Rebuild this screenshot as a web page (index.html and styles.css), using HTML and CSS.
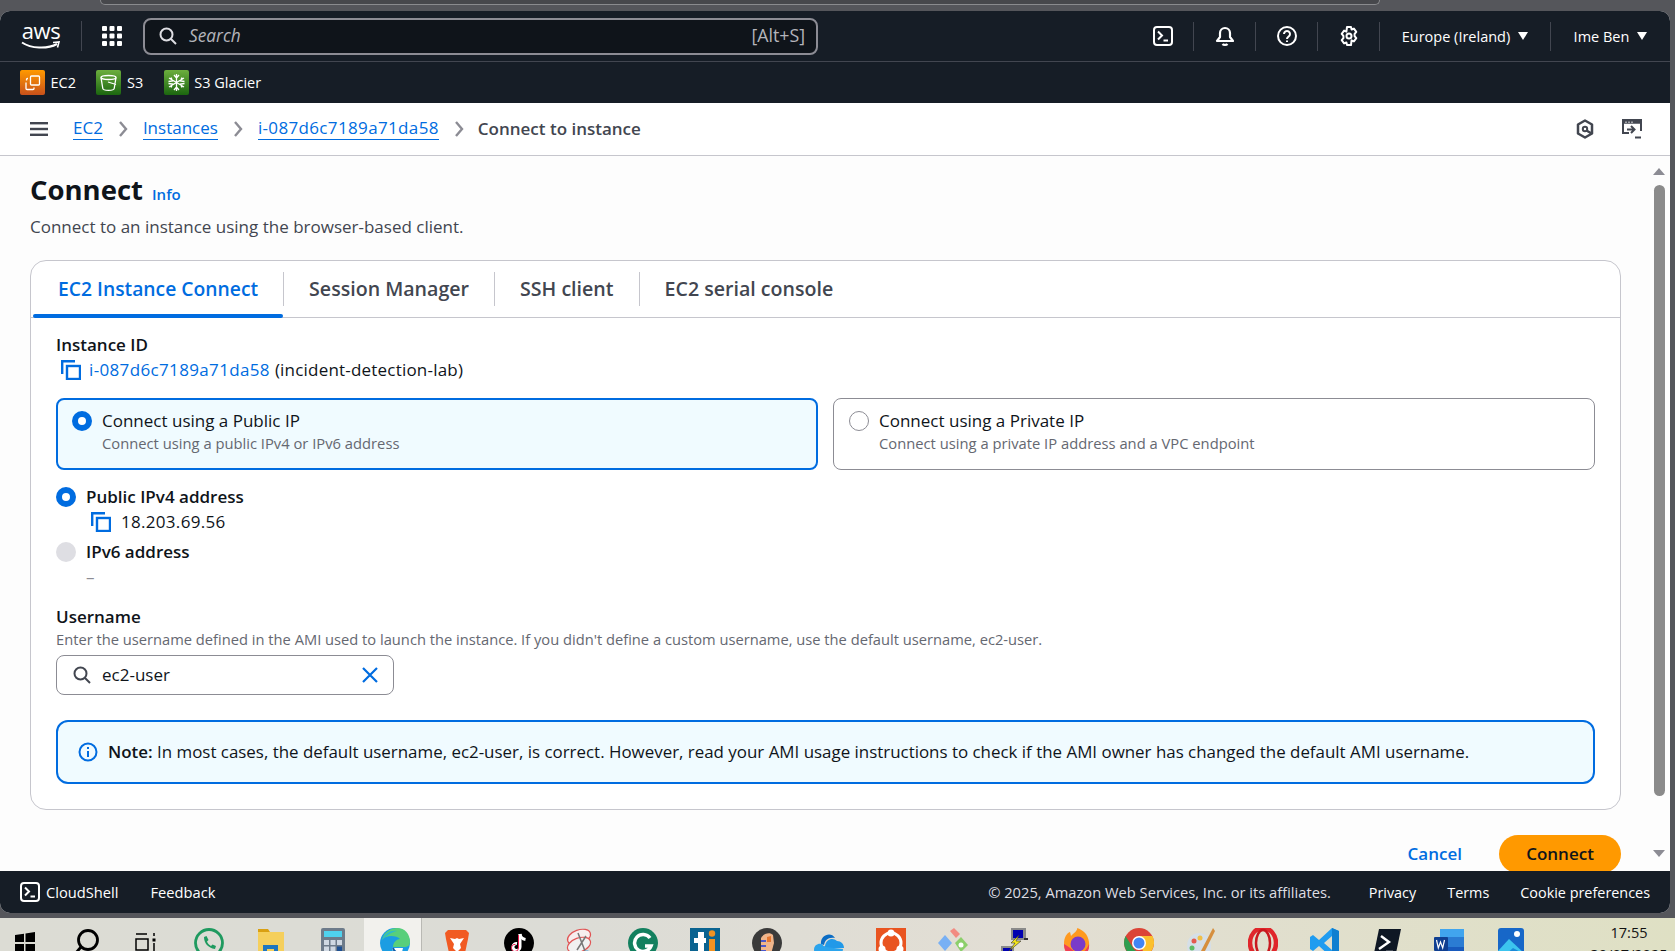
FILE: index.html
```html
<!DOCTYPE html>
<html lang="en">
<head>
    <meta charset="UTF-8">
    <title>Connect to instance | EC2</title>
    <link rel="stylesheet" href="styles.css">
</head>
<body>
    <div class="chrome"><div class="chrome-tab"></div></div>

    <div class="app">
        <header class="topnav">
            <div class="logo">
                <span class="logo-text">aws</span>
                <svg class="logo-smile" viewBox="0 0 40 9"><path d="M1 1.500C10 7.500 26 8.500 36 3" fill="none" stroke="#fff" stroke-width="2"/><path d="M32 1.500l6-.5-1.500 5.500" fill="none" stroke="#fff" stroke-width="1.600"/></svg>
            </div>
            <div class="nav-sep"></div>
            <svg class="grid-icon" viewBox="0 0 20 20" fill="#fff">
                <rect x="0" y="0" width="5" height="5" rx="1"/><rect x="7.500" y="0" width="5" height="5" rx="1"/><rect x="15" y="0" width="5" height="5" rx="1"/>
                <rect x="0" y="7.500" width="5" height="5" rx="1"/><rect x="7.500" y="7.500" width="5" height="5" rx="1"/><rect x="15" y="7.500" width="5" height="5" rx="1"/>
                <rect x="0" y="15" width="5" height="5" rx="1"/><rect x="7.500" y="15" width="5" height="5" rx="1"/><rect x="15" y="15" width="5" height="5" rx="1"/>
            </svg>
            <div class="searchbox">
                <svg class="icon-18" viewBox="0 0 18 18" fill="none" stroke="#dedee3" stroke-width="2"><circle cx="7.500" cy="7.500" r="6"/><path d="M12 12l5 5"/></svg>
                <span class="search-text">Search</span>
                <span class="search-key">[Alt+S]</span>
            </div>
            <div class="nav-right">
                <div class="nav-cell first">
                    <svg class="icon-20" viewBox="0 0 20 20" fill="none" stroke="#fff" stroke-width="2"><rect x="1" y="1" width="18" height="18" rx="3"/><path d="M5 5.500l4 4-4 4M10.500 14.500h4.500"/></svg>
                </div>
                <div class="nav-cell">
                    <svg class="icon-20" viewBox="0 0 20 20" fill="none" stroke="#fff" stroke-width="2.200" stroke-linejoin="round"><path d="M5 11V7a5 5 0 0 1 10 0v4l3 4H2z"/><path d="M7.500 18c1 1.200 4 1.200 5 0"/></svg>
                </div>
                <div class="nav-cell">
                    <svg class="icon-20" viewBox="0 0 20 20" fill="none" stroke="#fff" stroke-width="2"><circle cx="10" cy="10" r="9"/><path d="M7 8a3 3 0 1 1 4.500 2.600c-1 .6-1.500 1.100-1.500 2.400M10 14.500v1.500"/></svg>
                </div>
                <div class="nav-cell">
                    <svg class="icon-20" viewBox="0 0 20 20" fill="none" stroke="#fff" stroke-width="2" stroke-linejoin="round"><circle cx="10" cy="10" r="2.500"/><path d="M8 1h4l.6 2.600 2.300-1 2.400 3.200-1.700 2 0 2.400 1.700 2-2.400 3.200-2.300-1L12 19H8l-.6-2.600-2.300 1-2.400-3.200 1.700-2 0-2.400-1.700-2 2.400-3.200 2.300 1z"/></svg>
                </div>
                <div class="nav-cell region">
                    <span>Europe (Ireland)</span><span class="caret"></span>
                </div>
                <div class="nav-cell user">
                    <span>Ime Ben</span><span class="caret"></span>
                </div>
            </div>
        </header>

        <nav class="servicebar">
            <a class="service">
                <span class="service-icon orange">
                    <svg viewBox="0 0 25 25" fill="none" stroke="#fff" stroke-width="1.300"><rect x="10.500" y="6" width="9" height="9" rx="1"/><path d="M8 8.500H7.500a1 1 0 0 0-1 1v1M6 12.500v6a1 1 0 0 0 1 1h6a1 1 0 0 0 1-1v-1"/></svg>
                </span>EC2
            </a>
            <a class="service">
                <span class="service-icon green">
                    <svg viewBox="0 0 25 25" fill="none" stroke="#fff" stroke-width="1.300"><ellipse cx="12.500" cy="7.500" rx="7.500" ry="2"/><path d="M5 7.500l1.800 11c.2 1.200 2.500 1.800 5.700 1.800s5.500-.6 5.700-1.800l1.800-11M12 12l8 2.500"/></svg>
                </span>S3
            </a>
            <a class="service">
                <span class="service-icon green">
                    <svg viewBox="0 0 25 25" fill="none" stroke="#fff" stroke-width="1.300"><path d="M12.500 4v17M5 8l15 9M20 8L5 17M10 5l2.500 3L15 5M10 20l2.500-3 2.500 3M4.500 11.500l4-.5-1.500-3.500M20.500 13.500l-4 .5 1.500 3.500M20.500 11.500l-4-.5 1.500-3.500M4.500 13.500l4 .5-1.500 3.500"/></svg>
                </span>S3 Glacier
            </a>
        </nav>

        <div class="crumbbar">
            <svg class="burger" viewBox="0 0 18 14" fill="#424650"><rect width="18" height="2.400"/><rect y="5.800" width="18" height="2.400"/><rect y="11.600" width="18" height="2.400"/></svg>
            <a class="crumb">EC2</a>
            <svg class="chev" viewBox="0 0 10 16" fill="none" stroke="#8c8c94" stroke-width="2.400"><path d="M2 1l6 7-6 7"/></svg>
            <a class="crumb">Instances</a>
            <svg class="chev" viewBox="0 0 10 16" fill="none" stroke="#8c8c94" stroke-width="2.400"><path d="M2 1l6 7-6 7"/></svg>
            <a class="crumb crumb-id">i-087d6c7189a71da58</a>
            <svg class="chev" viewBox="0 0 10 16" fill="none" stroke="#8c8c94" stroke-width="2.400"><path d="M2 1l6 7-6 7"/></svg>
            <span class="crumb-current">Connect to instance</span>
            <div class="crumb-tools">
                <svg class="icon-20" viewBox="0 0 20 20" fill="none" stroke="#424650" stroke-width="2.500" stroke-linejoin="round"><path d="M10 1.500l7 4v9l-7 4-7-4v-9z"/><circle cx="10" cy="10" r="2.200" stroke-width="2"/><path d="M11.500 11.500l5 3"/></svg>
                <svg class="icon-20" viewBox="0 0 20 20" fill="none" stroke="#424650" stroke-width="2"><path d="M7 14H1V1h18v11" /><path d="M1 3h18" stroke-width="3.600"/><path d="M3.500 3.200h1M6.500 3.200h1M9.500 3.200h1" stroke="#fff" stroke-width="1.400"/><path d="M5 10.500h7M9 7l3.500 3.500L9 14" /><path d="M13 18.500h6"/></svg>
            </div>
        </div>

        <main class="main">
            <div class="content">
                <div class="title-row">
                    <h1>Connect</h1>
                    <a class="info">Info</a>
                </div>
                <p class="page-desc">Connect to an instance using the browser-based client.</p>

                <section class="card">
                    <div class="tabs">
                        <div class="tab active">EC2 Instance Connect</div>
                        <div class="tab">Session Manager</div>
                        <div class="tab">SSH client</div>
                        <div class="tab">EC2 serial console</div>
                    </div>
                    <div class="card-body">
                        <div class="label">Instance ID</div>
                        <div class="copy-row id-row">
                            <svg class="copy-icon" viewBox="0 0 20 20" fill="none" stroke="#006ce0" stroke-width="2.400"><path d="M1.200 14V1.200H14"/><rect x="6" y="6" width="13" height="13"/></svg>
                            <a class="link">i-087d6c7189a71da58</a>
                            <span class="id-name">(incident-detection-lab)</span>
                        </div>

                        <div class="options">
                            <div class="option selected">
                                <span class="radio on"></span>
                                <div>
                                    <div class="option-title">Connect using a Public IP</div>
                                    <div class="option-desc">Connect using a public IPv4 or IPv6 address</div>
                                </div>
                            </div>
                            <div class="option">
                                <span class="radio"></span>
                                <div>
                                    <div class="option-title">Connect using a Private IP</div>
                                    <div class="option-desc">Connect using a private IP address and a VPC endpoint</div>
                                </div>
                            </div>
                        </div>

                        <div class="addr-row">
                            <span class="radio on"></span>
                            <span class="label">Public IPv4 address</span>
                        </div>
                        <div class="copy-row ip-row">
                            <svg class="copy-icon" viewBox="0 0 20 20" fill="none" stroke="#006ce0" stroke-width="2.400"><path d="M1.200 14V1.200H14"/><rect x="6" y="6" width="13" height="13"/></svg>
                            <span class="ip">18.203.69.56</span>
                        </div>
                        <div class="addr-row v6">
                            <span class="radio off"></span>
                            <span class="label">IPv6 address</span>
                        </div>
                        <div class="dash">–</div>

                        <div class="label user-label">Username</div>
                        <div class="hint">Enter the username defined in the AMI used to launch the instance. If you didn't define a custom username, use the default username, ec2-user.</div>
                        <div class="input">
                            <svg class="icon-18" viewBox="0 0 18 18" fill="none" stroke="#424650" stroke-width="2"><circle cx="7.500" cy="7.500" r="6"/><path d="M12 12l5 5"/></svg>
                            <span class="input-text">ec2-user</span>
                            <svg class="icon-18 clear" viewBox="0 0 18 18" fill="none" stroke="#006ce0" stroke-width="2.200"><path d="M2 2l14 14M16 2L2 16"/></svg>
                        </div>

                        <div class="alert">
                            <svg class="icon-20" viewBox="0 0 20 20" fill="none" stroke="#006ce0" stroke-width="2"><circle cx="10" cy="10" r="8.500"/><path d="M10 9v6M10 5v2"/></svg>
                            <span class="alert-text"><b>Note:</b> In most cases, the default username, ec2-user, is correct. However, read your AMI usage instructions to check if the AMI owner has changed the default AMI username.</span>
                        </div>
                    </div>
                </section>

                <div class="actions">
                    <a class="cancel">Cancel</a>
                    <a class="connect">Connect</a>
                </div>
            </div>
            <div class="scrollbar">
                <span class="arrow-up"></span>
                <span class="thumb"></span>
                <span class="arrow-down"></span>
            </div>
        </main>

        <footer class="footer">
            <svg class="icon-20" viewBox="0 0 20 20" fill="none" stroke="#fff" stroke-width="2"><rect x="1" y="1" width="18" height="18" rx="3"/><path d="M5 5.500l4 4-4 4M10.500 14.500h4.500"/></svg>
            <a class="foot-shell">CloudShell</a>
            <a class="foot-feedback">Feedback</a>
            <span class="foot-copy">© 2025, Amazon Web Services, Inc. or its affiliates.</span>
            <a class="foot-link">Privacy</a>
            <a class="foot-link">Terms</a>
            <a class="foot-link">Cookie preferences</a>
        </footer>
    </div>

    <div class="taskbar">
        <div class="task-icons">
            <div class="task-item"><svg viewBox="0 0 30 30"><path d="M7 7l9-1.300V14H7zM17.500 5.500L27 4v10h-9.500zM7 16h9v9l-9-1.300zM17.500 16H27v10l-9.500-1.500z" fill="#000"/></svg></div>
            <div class="task-item"><svg viewBox="0 0 30 30" fill="none" stroke="#000" stroke-width="2.800"><circle cx="18" cy="12" r="9.500"/><path d="M11 19l-6 7"/></svg></div>
            <div class="task-item"><svg viewBox="0 0 30 30" fill="none" stroke="#000" stroke-width="1.500"><path d="M4 6h11M4 11h12v11H4zM4 26h12"/><path d="M22 5v3M22 15v9"/><rect x="20.500" y="10.500" width="3" height="3" fill="#000" stroke="none"/></svg></div>
            <div class="task-item"><svg viewBox="0 0 30 30" fill="none" stroke="#1f9a5f" stroke-width="2.800"><circle cx="15" cy="15" r="13.500"/><path d="M10 9c0 6 4 11 11 12l1-3-3.500-1.500-1.500 1.500c-2-1-3.500-3-4-4.500l1.500-1.500L12.500 8z" fill="#1f9a5f" stroke="none"/></svg></div>
            <div class="task-item"><svg viewBox="0 0 30 30"><path d="M2 1h10l2 3v4H2z" fill="#d9a012"/><rect x="2" y="4" width="26" height="26" fill="#f5cf5c"/><rect x="7" y="17" width="15" height="13" fill="#1f76bf"/><rect x="11" y="21" width="7" height="9" fill="#f5cf5c"/></svg></div>
            <div class="task-item"><svg viewBox="0 0 30 30"><rect x="3" y="0" width="24" height="30" rx="2" fill="#6d7b8a"/><rect x="6" y="3" width="18" height="6" fill="#4fd2ee"/><path d="M6 12h5v5H6zM12.500 12h5v5h-5zM19 12h5v5h-5zM6 18.500h5v5H6zM12.500 18.500h5v5h-5zM6 25h5v5H6zM12.500 25h5v5h-5z" fill="#cfd8e2"/><rect x="19" y="18.500" width="5" height="11.500" fill="#1d4f91"/></svg></div>
            <div class="task-item edge"><svg viewBox="0 0 30 30"><circle cx="15" cy="15" r="15" fill="#1b9de2"/><path d="M2 12C4 3 12 0 17 0c8 0 13 6 13 14 0 3-2 5-6 5H13c0-5 4-8 7-8-3-3-13-5-18 1z" fill="#58cf7a"/><path d="M2 12C5 5 11 2 17 3c-6 1-12 6-15 9z" fill="#2bb9cf"/><path d="M12 19c0 5 4 9 9 9l2-8H12z" fill="#fff"/><path d="M13 20c1 3 3 5 7 5" stroke="#0c5aa6" stroke-width="2" fill="none"/></svg></div>
            <div class="task-item"><svg viewBox="0 0 30 30"><path d="M6 2h18l3 3-1 6-3 14-8 5-8-5L4 11 3 5z" fill="#f15a22"/><path d="M8 10l5 1 2-1 2 1 5-1-4 6 1 4-4 4-4-4 1-4z" fill="#fff"/></svg></div>
            <div class="task-item"><svg viewBox="0 0 30 30"><circle cx="15" cy="15" r="15" fill="#000"/><path d="M16 6v13a3.500 3.500 0 1 1-3-3.500" fill="none" stroke="#fff" stroke-width="3"/><path d="M16 6c.5 3 2.500 5 5.500 5.500" fill="none" stroke="#fff" stroke-width="3"/><path d="M14.500 7v13a3.500 3.500 0 1 1-3-3.500" fill="none" stroke="#ee1d52" stroke-width="1"/></svg></div>
            <div class="task-item"><svg viewBox="0 0 30 30" fill="none"><ellipse cx="13" cy="9" rx="12" ry="7" fill="#f7eeee" stroke="#e05555" stroke-width="1.200" transform="rotate(-20 13 9)"/><ellipse cx="13" cy="17" rx="12" ry="7" fill="#f1f1f1" stroke="#e05555" stroke-width="1.200" transform="rotate(-20 13 17)"/><path d="M12 5l7 18M20 8l-9 14" stroke="#777" stroke-width="1.500"/><circle cx="21" cy="27" r="3.500" stroke="#1e88d9" stroke-width="2"/><circle cx="14" cy="28" r="3.500" stroke="#1e88d9" stroke-width="2"/></svg></div>
            <div class="task-item"><svg viewBox="0 0 30 30"><circle cx="15" cy="15" r="15" fill="#13805f"/><path d="M22 10a8.500 8.500 0 1 0 1 8h-6" fill="none" stroke="#fff" stroke-width="3.500"/></svg></div>
            <div class="task-item"><svg viewBox="0 0 30 30"><rect width="30" height="30" fill="#0a6390"/><path d="M8 4v6H4v5h4v15h6V15h2v-5h-2V4z" fill="#fff"/><rect x="19" y="11" width="6" height="19" fill="#f19222"/><circle cx="22" cy="5.500" r="3.200" fill="#f19222"/></svg></div>
            <div class="task-item"><svg viewBox="0 0 30 30"><circle cx="15" cy="15" r="15" fill="#3a3a3a"/><path d="M9 10c3-5 9-6 12-3l1 8-4 15H9z" fill="#f0b58b"/><path d="M9 13h5M9 18h5M9 23h5" stroke="#4d58c9" stroke-width="2"/><path d="M15 9l4-1v6h-4z" fill="#e5762f"/></svg></div>
            <div class="task-item"><svg viewBox="0 0 30 30"><path d="M7 16c-1-9 10-13 14-6-7-1-10 2-11 7z" fill="#0b6cc4"/><path d="M11 18c1-7 8-9 12-5 4 0 7 3 7 7H8z" fill="#2199e8"/><path d="M0 22c0-5 4-7 8-6 1 2 3 3 4 3l8 1 9 1c0 3-2 5-5 5H5c-3 0-5-2-5-4z" fill="#2ba4ec"/></svg></div>
            <div class="task-item"><svg viewBox="0 0 30 30"><rect width="30" height="30" fill="#e95420"/><circle cx="15" cy="15" r="10" fill="none" stroke="#fff" stroke-width="3"/><circle cx="15" cy="5" r="3.500" fill="#fff"/><circle cx="6" cy="21" r="3.500" fill="#fff"/><circle cx="24" cy="21" r="3.500" fill="#fff"/></svg></div>
            <div class="task-item"><svg viewBox="0 0 30 30"><path d="M12 3l4-3 6 6-4 4z" fill="#f28b82"/><path d="M0 15l7-8 7 8-7 8z" fill="#78b0f4"/><path d="M17 15l6-6 7 8-7 7z" fill="#8ccf6b"/><path d="M8 30l6-7 6 7z" fill="#fbd75b"/><circle cx="23" cy="17" r="2.500" fill="#fff"/></svg></div>
            <div class="task-item"><svg viewBox="0 0 30 30"><rect x="11" y="0" width="15" height="12" fill="#8a8a8a"/><rect x="13" y="2" width="10" height="8" fill="#0000b0"/><rect x="1" y="18" width="13" height="12" fill="#8a8a8a"/><rect x="3" y="20" width="9" height="10" fill="#0000b0"/><path d="M19 7l-8 8 4 0-6 8 12-10-5 0z" fill="#f5e71b" stroke="#333" stroke-width=".6"/><path d="M24 10h4v2h-4z" fill="#333"/></svg></div>
            <div class="task-item"><svg viewBox="0 0 30 30"><path d="M2 16C2 9 5 5 8 4l1 4c3-3 7-6 6-8 6 2 11 6 12 14 1 9-5 16-12 16S2 24 2 16z" fill="#ff9a1f"/><path d="M2 16c0 9 6 14 13 14 8 0 13-7 12-14-3 8-9 11-14 8-3-2-5-5-11-8z" fill="#f03e55"/><circle cx="16" cy="16" r="7.500" fill="#7a3bc9"/></svg></div>
            <div class="task-item"><svg viewBox="0 0 30 30"><circle cx="15" cy="15" r="15" fill="#db4437"/><path d="M15 8h13.500a15 15 0 0 1-7 20L15 15z" fill="#fbc02d"/><path d="M1.500 8l9 14 11 6A15 15 0 0 1 1.500 8z" fill="#2e9e4f"/><circle cx="15" cy="15" r="7" fill="#fff"/><circle cx="15" cy="15" r="5.500" fill="#4285f4"/></svg></div>
            <div class="task-item"><svg viewBox="0 0 30 30"><ellipse cx="13" cy="18" rx="12" ry="13" fill="#d5dfe8"/><circle cx="8" cy="13" r="2.500" fill="#e45a4e"/><circle cx="14" cy="10" r="2.500" fill="#f0c048"/><circle cx="6" cy="20" r="2.500" fill="#5dbb63"/><path d="M27 0l2 3-11 22-3-2z" fill="#d68f3e"/></svg></div>
            <div class="task-item"><svg viewBox="0 0 30 30" fill="none"><ellipse cx="15" cy="15" rx="13" ry="15" stroke="#e0262b" stroke-width="4.500"/><ellipse cx="15" cy="15" rx="7" ry="13" stroke="#c9181e" stroke-width="2.500"/></svg></div>
            <div class="task-item"><svg viewBox="0 0 30 30"><path d="M22 0l7 3v24l-7 3-13-12-6 5-3-2V9l3-2 6 5zM22 8l-8 7 8 7z" fill="#1f9cf0"/><path d="M22 0l7 3v24l-7 3z" fill="#0f7fd0"/></svg></div>
            <div class="task-item"><svg viewBox="0 0 30 30"><path d="M7 1h22l-6 29H1z" fill="#0e1724"/><path d="M9 8l8 6-10 7M14 24h7" fill="none" stroke="#fff" stroke-width="2.400"/></svg></div>
            <div class="task-item"><svg viewBox="0 0 30 30"><rect x="6" y="1" width="24" height="29" rx="2" fill="#2b7cd3"/><rect x="6" y="1" width="24" height="8" fill="#41a5ee"/><rect x="6" y="19" width="24" height="11" fill="#185abd"/><rect x="0" y="9" width="14" height="14" rx="1" fill="#103f91"/><path d="M2.500 12l1.800 8 2.200-6 2.200 6 1.800-8" fill="none" stroke="#fff" stroke-width="1.200"/></svg></div>
            <div class="task-item"><svg viewBox="0 0 30 30"><rect x="2" y="0" width="26" height="30" rx="3" fill="#1767c8"/><circle cx="21" cy="6" r="3" fill="#fff"/><path d="M2 23l11-12 15 14v5H2z" fill="#3cc4ee"/><path d="M8 28l9-8 11 6v4H8z" fill="#1a8ad8"/></svg></div>
        </div>
        <div class="clock">
            <div>17:55</div>
            <div class="clock-date">30/07/2025</div>
        </div>
    </div>
</body>
</html>
```

FILE: styles.css
```css
*{
    box-sizing: border-box;
}
html, body{
    margin: 0;
    height: 951px;
    overflow: hidden;
}
body{
    display: flex;
    flex-direction: column;
    background: #55565b;
    font-family: "Open Sans", "Noto Sans", sans-serif;
    font-size: 17px;
    color: #0f141a;
}
a{
    cursor: pointer;
}
svg{
    display: block;
    flex: none;
}
.icon-18{
    width: 18px;
    height: 18px;
}
.icon-20{
    width: 20px;
    height: 20px;
}

/* browser strip */
.chrome{
    height: 11px;
    flex: none;
}
.chrome-tab{
    width: 1280px;
    height: 5px;
    margin-left: 100px;
    background: #47484c;
    border: 1px solid #8a8b8e;
    border-top: 0;
    border-radius: 0 0 8px 8px;
}
.app{
    width: 1670px;
    height: 902px;
    flex: none;
    display: flex;
    flex-direction: column;
    border-radius: 10px;
    overflow: hidden;
    background: #fff;
}

/* top nav */
.topnav{
    height: 51px;
    flex: none;
    display: flex;
    align-items: center;
    padding-left: 21px;
    background: #161d26;
    border-bottom: 1px solid #424650;
    color: #fff;
    font-size: 14.500px;
}
.logo{
    width: 40px;
    height: 32px;
    margin-top: -2px;
}
.logo-text{
    display: block;
    font-size: 22px;
    font-weight: 500;
    line-height: 22px;
    letter-spacing: -0.500px;
    text-align: center;
}
.logo-smile{
    width: 40px;
    height: 9px;
}
.nav-sep{
    width: 1px;
    height: 30px;
    margin-left: 20px;
    background: #424650;
}
.grid-icon{
    width: 20px;
    height: 20px;
    margin-left: 20px;
}
.searchbox{
    width: 675px;
    height: 37px;
    margin-left: 21px;
    padding: 0 11px 0 14px;
    display: flex;
    align-items: center;
    background: #0f141a;
    border: 2px solid #8c8c94;
    border-radius: 8px;
}
.search-text{
    margin: -2px 0 0 12px;
    font-size: 17.300px;
    font-style: italic;
    color: #b4b4bb;
}
.search-key{
    margin: -2px 0 0 auto;
    font-size: 17.800px;
    color: #b4b4bb;
}
.nav-right{
    margin-left: auto;
    display: flex;
    align-items: center;
}
.nav-cell{
    width: 62px;
    height: 29px;
    display: flex;
    align-items: center;
    justify-content: center;
    border-left: 1px solid #424650;
}
.nav-cell.first{
    border-left: 0;
    width: 61px;
}
.nav-cell.region{
    width: 171px;
}
.nav-cell.user{
    width: 120px;
}
.caret{
    width: 0;
    height: 0;
    margin-left: 8px;
    border-left: 5.500px solid transparent;
    border-right: 5.500px solid transparent;
    border-top: 8px solid #fff;
}

/* favorites */
.servicebar{
    height: 41px;
    flex: none;
    display: flex;
    align-items: center;
    padding-left: 20px;
    background: #161d26;
    color: #fff;
    font-size: 14.500px;
}
.service{
    display: flex;
    align-items: center;
    margin-right: 20.500px;
}
.service-icon{
    width: 25px;
    height: 25px;
    margin-right: 5.500px;
    border-radius: 2px;
}
.service-icon.orange{
    background: linear-gradient(0deg, #c8511b, #ff9900);
}
.service-icon.green{
    background: linear-gradient(0deg, #1b660f, #6cae3e);
}

/* breadcrumbs */
.crumbbar{
    height: 53px;
    flex: none;
    display: flex;
    align-items: center;
    padding: 0 30px;
    background: #fff;
    border-bottom: 1px solid #c6c6cd;
    font-size: 17px;
}
.burger{
    width: 18px;
    height: 14px;
    margin-right: 25px;
}
.crumb{
    margin-top: -2px;
    color: #006ce0;
    border-bottom: 1px solid #006ce0;
    line-height: 22px;
}
.crumb-id{
    letter-spacing: 0.350px;
}
.chev{
    width: 10px;
    height: 16px;
    margin: 0 15px;
}
.crumb-current{
    margin-top: -2px;
    margin-left: -1px;
    font-weight: 600;
    color: #424650;
}
.crumb-tools{
    margin-left: auto;
    margin-right: -2px;
    display: flex;
    gap: 27px;
}

/* main area */
.main{
    flex: 1;
    min-height: 0;
    display: flex;
    background: #fdfdfd;
    overflow: hidden;
}
.content{
    width: 1650px;
    padding: 0 29px 0 30px;
}
.title-row{
    height: 48px;
    padding-top: 13px;
    display: flex;
    align-items: baseline;
}
h1{
    margin: 0;
    font-size: 27.500px;
    font-weight: 700;
    line-height: 42px;
}
.info{
    margin-left: 9px;
    font-size: 15px;
    font-weight: 600;
    color: #006ce0;
}
.page-desc{
    margin: 12px 0 0;
    line-height: 22px;
    color: #424650;
}
.card{
    margin-top: 22px;
    height: 550px;
    background: #fff;
    border: 1px solid #c6c6cd;
    border-radius: 16px;
}
.tabs{
    height: 57px;
    padding-left: 2px;
    display: flex;
    align-items: center;
    border-bottom: 1px solid #c6c6cd;
}
.tab{
    height: 34px;
    padding: 0 25px 2px;
    display: flex;
    align-items: center;
    border-left: 1px solid #c6c6cd;
    font-size: 19.600px;
    font-weight: 600;
    color: #424650;
}
.tab.active{
    position: relative;
    border-left: 0;
    font-size: 19.300px;
    color: #006ce0;
}
.tab.active::after{
    content: "";
    position: absolute;
    left: 0;
    right: 0;
    bottom: -12px;
    height: 4px;
    background: #006ce0;
    border-radius: 2px;
}
.card-body{
    padding: 16px 25px 0;
}
.label{
    font-weight: 600;
    line-height: 22px;
}
.copy-row{
    display: flex;
    align-items: center;
    line-height: 22px;
}
.id-row{
    margin-top: 3px;
    padding-left: 5px;
}
.copy-icon{
    width: 20px;
    height: 20px;
    margin-right: 8px;
}
.link{
    margin-right: 5px;
    color: #006ce0;
    letter-spacing: 0.350px;
}
.id-name{
    letter-spacing: 0.200px;
}
.options{
    margin-top: 17px;
    display: flex;
    gap: 15px;
}
.option{
    flex: 1;
    height: 72px;
    padding: 11px 14px 11px 15px;
    display: flex;
    gap: 10px;
    border: 1px solid #8c8c94;
    border-radius: 8px;
    background: #fff;
}
.option.selected{
    padding: 10px 13px 10px 14px;
    border: 2px solid #006ce0;
    background: #f0fbff;
}
.option-title{
    line-height: 22px;
}
.option-desc{
    margin-top: 1px;
    font-size: 14.750px;
    line-height: 20px;
    color: #656871;
}
.radio{
    width: 20px;
    height: 20px;
    margin-top: 1px;
    flex: none;
    border: 1.500px solid #8c8c94;
    border-radius: 50%;
    background: #fff;
}
.radio.on{
    border: 6px solid #006ce0;
}
.radio.off{
    border: 0;
    background: #dedee3;
}
.addr-row{
    margin-top: 16px;
    display: flex;
    align-items: center;
    gap: 10px;
}
.addr-row .radio{
    margin-top: 0;
}
.addr-row.v6{
    margin-top: 8px;
}
.ip-row{
    margin-top: 3px;
    padding-left: 35px;
}
.ip-row .copy-icon{
    margin-right: 10px;
}
.ip{
    letter-spacing: 0.300px;
}
.dash{
    margin-top: 4px;
    padding-left: 30px;
    line-height: 20px;
    color: #8c8c94;
}
.user-label{
    margin-top: 19px;
}
.hint{
    margin-top: 1px;
    font-size: 14.700px;
    line-height: 20px;
    color: #656871;
}
.input{
    width: 338px;
    height: 40px;
    margin-top: 6px;
    padding: 0 14px 0 16px;
    display: flex;
    align-items: center;
    border: 1px solid #8c8c94;
    border-radius: 8px;
    background: #fff;
}
.input-text{
    margin: -2px 0 0 11px;
}
.clear{
    margin-left: auto;
}
.alert{
    height: 64px;
    margin-top: 25px;
    padding: 0 20px;
    display: flex;
    align-items: center;
    gap: 10px;
    background: #f0fbff;
    border: 2px solid #006ce0;
    border-radius: 12px;
}
.alert-text{
    margin-top: -2px;
    font-size: 16.920px;
}
.alert b{
    font-weight: 600;
}
.actions{
    margin-top: 25px;
    display: flex;
    align-items: center;
    justify-content: flex-end;
    gap: 37px;
}
.cancel{
    margin-top: -2px;
    font-weight: 600;
    color: #006ce0;
}
.connect{
    width: 122px;
    height: 38px;
    padding-bottom: 2px;
    display: flex;
    align-items: center;
    justify-content: center;
    background: #ff9900;
    border-radius: 20px;
    font-weight: 600;
}

/* scrollbar */
.scrollbar{
    width: 20px;
    padding: 12px 0 14px 3px;
    display: flex;
    flex-direction: column;
    align-items: flex-start;
    background: #fdfdfd;
}
.arrow-up{
    border-left: 6px solid transparent;
    border-right: 6px solid transparent;
    border-bottom: 7px solid #8c8c94;
}
.thumb{
    width: 11px;
    height: 611px;
    margin: 10px 0 0 1px;
    background: #8b8b8b;
    border-radius: 6px;
}
.arrow-down{
    margin-top: auto;
    border-left: 6px solid transparent;
    border-right: 6px solid transparent;
    border-top: 7px solid #8c8c94;
}

/* footer */
.footer{
    height: 42px;
    flex: none;
    display: flex;
    align-items: center;
    padding: 0 20px;
    background: #161d26;
    color: #fff;
    font-size: 14.700px;
}
.foot-shell{
    margin-left: 6px;
}
.foot-feedback{
    margin-left: 32px;
}
.foot-copy{
    margin-left: auto;
    margin-right: 7px;
    color: #dedee3;
}
.foot-link{
    margin-left: 31px;
    font-size: 14.400px;
}

/* windows taskbar */
.taskbar{
    height: 33px;
    margin-top: 5px;
    flex: none;
    display: flex;
    overflow: hidden;
    background: linear-gradient(90deg, #dcdcd4, #dcdcd6 35%, #e2ded4 60%, #dfe0c4);
}
.task-icons{
    margin-left: -8px;
    display: flex;
}
.task-item{
    width: 62px;
    height: 33px;
    padding: 10px 16px 0;
}
.task-item svg{
    width: 30px;
    height: 30px;
}
.task-item.edge{
    width: 58px;
    margin-right: 4px;
    padding-right: 0;
    background: #f2f1ed;
    border-right: 1px solid #b9b9b4;
}
.clock{
    margin-left: auto;
    width: 92px;
    padding: 5px 0 0 0;
    text-align: center;
    font-size: 14.500px;
    line-height: 20px;
    color: #111;
}
.clock-date{
    margin-top: 2px;
}
```
